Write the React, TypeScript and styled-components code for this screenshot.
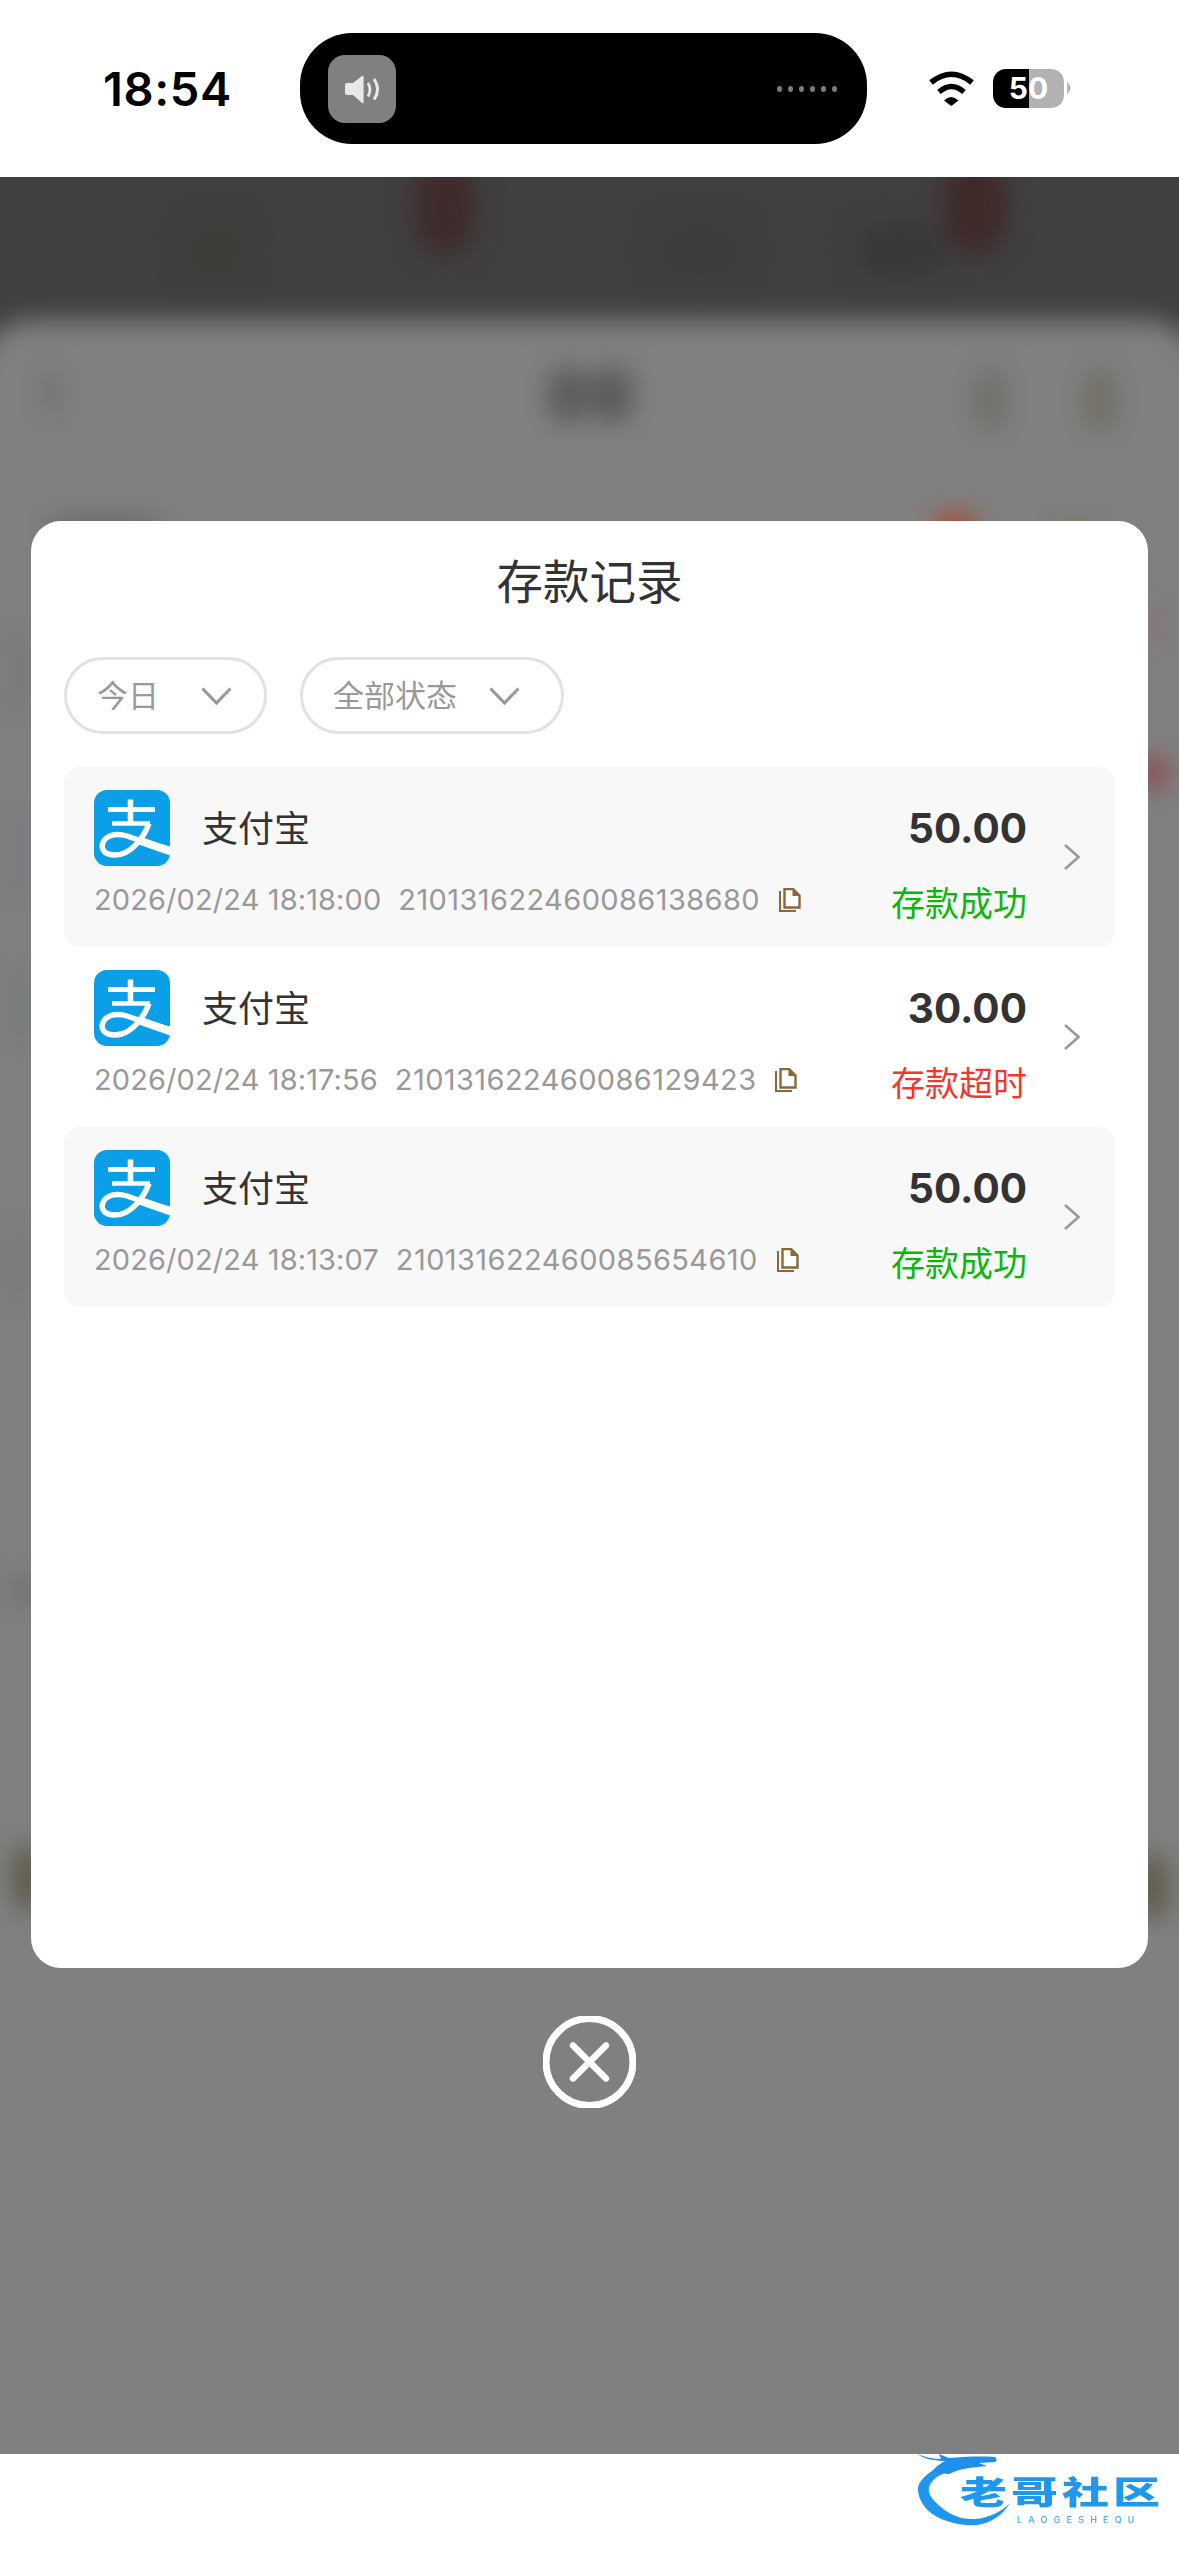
import React from 'react';
import styled, {createGlobalStyle} from 'styled-components';

const Global_Style = createGlobalStyle`
  html, body {
    margin: 0;
    padding: 0;
    background: #fff;
  }
  * {
    box-sizing: border-box;
  }
`;

const FONT = `Inter, 'Noto Sans CJK SC', sans-serif`;

const Page = styled.div`
  width: 1179px;
  height: 2556px;
  display: flex;
  flex-direction: column;
  overflow: hidden;
  font-family: ${FONT};
  background: #fff;
`;

/* status bar */
const Status_Bar = styled.div`
  height: 177px;
  flex-shrink: 0;
  display: flex;
  align-items: center;
  padding-left: 103px;
  background: #fff;
`;
const Clock = styled.div`
  width: 197px;
  font-family: Inter, sans-serif;
  font-size: 47px;
  font-weight: 600;
  letter-spacing: 0.6px;
  line-height: 1;
  color: #000;
`;
const Island = styled.div`
  width: 567px;
  height: 111px;
  border-radius: 52px;
  background: #000;
  display: flex;
  align-items: center;
  justify-content: space-between;
  padding: 0 30px 0 28px;
`;
const Volume_Tile = styled.div`
  width: 68px;
  height: 68px;
  border-radius: 17px;
  background: #808080;
`;
const Dots = styled.div`
  display: flex;
  gap: 6px;
`;
const Dot = styled.span`
  width: 5px;
  height: 6px;
  border-radius: 50%;
  background: #7d7d7d;
`;
const Wifi = styled.svg`
  margin-left: 61px;
  flex-shrink: 0;
`;
const Battery = styled.div`
  position: relative;
  margin-left: 18px;
  width: 71px;
  height: 39px;
  border-radius: 13px;
  background: linear-gradient(90deg, #000 36px, #b2b2b2 36px);
  color: #fff;
  font-family: Inter, sans-serif;
  font-size: 30px;
  font-weight: 700;
  line-height: 39px;
  text-align: center;
  &::after {
    content: '';
    position: absolute;
    left: 74px;
    top: 12px;
    border-left: 4px solid #b2b2b2;
    border-top: 7px solid transparent;
    border-bottom: 7px solid transparent;
  }
`;

/* dimmed area */
const Stage = styled.div`
  position: relative;
  height: 2277px;
  flex-shrink: 0;
  overflow: hidden;
  background: #404040;
  padding: 344px 31px 0;
  display: flex;
  flex-direction: column;
  align-items: center;
`;
const Blur_Layer = styled.div`
  position: absolute;
  inset: 0;
  filter: blur(13px);
`;
const Back_Sheet = styled.div`
  position: absolute;
  left: -26px;
  right: -26px;
  top: 143px;
  bottom: -60px;
  border-radius: 60px 60px 0 0;
  background: #808080;
`;
const Spot = styled.div<{$x: number; $y: number; $w: number; $h: number; $c: string}>`
  position: absolute;
  left: ${(p) => p.$x - p.$w / 2}px;
  top: ${(p) => p.$y - 177 - p.$h / 2}px;
  width: ${(p) => p.$w}px;
  height: ${(p) => p.$h}px;
  border-radius: 40%;
  background: ${(p) => p.$c};
`;

const Modal = styled.div`
  position: relative;
  width: 1117px;
  height: 1447px;
  flex-shrink: 0;
  border-radius: 30px;
  background: #fff;
  padding: 36px 33px 0;
`;
const Title = styled.div`
  font-size: 46.5px;
  line-height: 50px;
  text-align: center;
  color: #333;
`;
const Filters = styled.div`
  display: flex;
  gap: 33px;
  margin-top: 50px;
`;
const Pill = styled.div<{$width: number; $gap: number}>`
  width: ${(p) => p.$width}px;
  height: 77px;
  border: 3px solid #e2e2e2;
  border-radius: 39px;
  display: flex;
  align-items: center;
  gap: ${(p) => p.$gap}px;
  padding-left: 30px;
  font-size: 31px;
  color: #999;
`;
const Pill_Label = styled.span`
  margin-top: -4px;
`;
const List = styled.div`
  margin-top: 33px;
`;
const Card = styled.div<{$tinted: boolean}>`
  height: 180px;
  border-radius: 16px;
  background: ${(p) => (p.$tinted ? '#f8f8f8' : '#fff')};
  display: flex;
  align-items: center;
  padding: 0 35px 0 30px;
`;
const Card_Main = styled.div`
  flex: 1;
  padding-right: 37px;
`;
const Top_Row = styled.div`
  display: flex;
  align-items: center;
  height: 76px;
  margin-top: -3px;
`;
const Alipay_Icon = styled.svg`
  flex-shrink: 0;
  border-radius: 13px;
`;
const Name = styled.div`
  flex: 1;
  margin: -5px 0 0 32px;
  font-size: 36px;
  color: #333;
`;
const Amount = styled.div`
  font-family: Inter, sans-serif;
  font-size: 40.5px;
  font-weight: 700;
  color: #333;
`;
const Bottom_Row = styled.div`
  display: flex;
  align-items: center;
  justify-content: space-between;
  height: 40px;
  margin-top: 15px;
`;
const Meta = styled.div`
  display: flex;
  align-items: center;
  font-family: Inter, sans-serif;
  font-size: 29px;
  letter-spacing: 0.1px;
  color: #999;
  margin-top: -3px;
`;
const Order_No = styled.span`
  margin-left: 17px;
  letter-spacing: 0.4px;
`;
const Copy_Icon = styled.svg`
  margin-left: 19px;
`;
const Status = styled.div<{$ok: boolean}>`
  font-size: 34px;
  color: ${(p) => (p.$ok ? '#0ab70a' : '#f0392b')};
`;
const Close_Icon = styled.svg`
  position: relative;
  flex-shrink: 0;
  margin-top: 48px;
`;

/* watermark strip */
const Bottom_Bar = styled.div`
  flex: 1;
  display: flex;
  justify-content: flex-end;
  background: #fff;
`;
const Logo = styled.div`
  position: relative;
  width: 262px;
  height: 102px;
  padding-left: 43px;
`;
const Logo_Dragon = styled.svg`
  position: absolute;
  left: 0;
  top: 0;
  filter: blur(0.5px);
`;
const Logo_Name = styled.div`
  margin-top: 8px;
  height: 60px;
  font-size: 47px;
  font-weight: 900;
  line-height: 60px;
  letter-spacing: 4px;
  white-space: nowrap;
  transform: scaleY(0.68);
  color: #1f97ef;
  filter: blur(0.6px);
`;
const Logo_Sub = styled.div`
  margin: -7px 0 0 57px;
  font-family: Inter, sans-serif;
  font-size: 9px;
  font-weight: 500;
  letter-spacing: 6.2px;
  line-height: 10px;
  white-space: nowrap;
  color: #4aa9ec;
  filter: blur(0.4px);
`;

const SPOTS = [
  {x: 445, y: 205, w: 62, h: 100, c: '#3f2b2b'},
  {x: 975, y: 205, w: 62, h: 100, c: '#3f2929'},
  {x: 215, y: 250, w: 60, h: 60, c: '#3c3c38'},
  {x: 700, y: 250, w: 90, h: 60, c: '#3c3c3c'},
  {x: 900, y: 250, w: 90, h: 50, c: '#383838'},
  {x: 568, y: 395, w: 42, h: 56, c: '#5c5c5c'},
  {x: 612, y: 395, w: 42, h: 56, c: '#5a5a5a'},
  {x: 50, y: 393, w: 20, h: 50, c: '#727272'},
  {x: 990, y: 400, w: 36, h: 66, c: '#72706b'},
  {x: 1100, y: 400, w: 36, h: 66, c: '#726f65'},
  {x: 955, y: 530, w: 42, h: 34, c: '#a8482f'},
  {x: 105, y: 530, w: 120, h: 30, c: '#6a6a6a'},
  {x: 1075, y: 530, w: 60, h: 26, c: '#7d786c'},
  {x: 20, y: 672, w: 20, h: 90, c: '#7a7773'},
  {x: 22, y: 854, w: 20, h: 100, c: '#777a80'},
  {x: 22, y: 1007, w: 20, h: 90, c: '#747a78'},
  {x: 22, y: 1265, w: 20, h: 90, c: '#7b7874'},
  {x: 24, y: 1590, w: 26, h: 36, c: '#707070'},
  {x: 28, y: 1878, w: 30, h: 66, c: '#5a5545'},
  {x: 1150, y: 624, w: 24, h: 40, c: '#877272'},
  {x: 1152, y: 773, w: 34, h: 34, c: '#8a4d4d'},
  {x: 1152, y: 1887, w: 30, h: 66, c: '#5a5545'},
];

const RECORDS = [
  {time: '2026/02/24 18:18:00', no: '210131622460086138680', amount: '50.00', ok: true},
  {time: '2026/02/24 18:17:56', no: '210131622460086129423', amount: '30.00', ok: false},
  {time: '2026/02/24 18:13:07', no: '210131622460085654610', amount: '50.00', ok: true},
];

function Chevron_Down() {
  return (
    <svg width='31' height='18' viewBox='0 0 31 18' fill='none'>
      <path d='M1.5 1.5 15.5 16 29.5 1.5' stroke='#999' strokeWidth='3.2' />
    </svg>
  );
}

function Alipay() {
  return (
    <Alipay_Icon width='76' height='76' viewBox='0 0 76 76'>
      <rect width='76' height='76' fill='#0a9fe6' />
      <g fill='none' stroke='#fff' strokeWidth='5'>
        <path d='M14 19.5H61' />
        <path d='M36.5 9.5V32' strokeWidth='5.5' />
        <path d='M18 33.5H56' strokeWidth='4.5' />
        <path
          d='M55 33.5C50 47 37 65 21 65 11 65 7 60 8.5 54 10.5 46 21 42 33 46 44 50 56 54 78 60'
          strokeWidth='5.5'
        />
        <path d='M44 50 78 62' strokeWidth='8' />
      </g>
    </Alipay_Icon>
  );
}

function Copy() {
  return (
    <Copy_Icon width='22' height='24' viewBox='0 0 22 24' fill='none'>
      <path d='M1 3V23H17' stroke='#8a683a' strokeWidth='2' />
      <path d='M5.5 1H14L20.5 7.5V19.5H5.5Z' fill='#fff' stroke='#8a683a' strokeWidth='2.4' />
      <path d='M13.5 1 20.5 8H13.5Z' fill='#8a683a' />
    </Copy_Icon>
  );
}

function Chevron_Right() {
  return (
    <svg width='16' height='26' viewBox='0 0 16 26' fill='none' style={{flexShrink: 0}}>
      <path d='M1 1 14.5 13 1 25' stroke='#999' strokeWidth='2.6' />
    </svg>
  );
}

export default function App() {
  return (
    <Page>
      <Global_Style />
      <Status_Bar>
        <Clock>18:54</Clock>
        <Island>
          <Volume_Tile>
            <svg width='68' height='68' viewBox='0 0 68 68' fill='none'>
              <path
                d='M17 30a2 2 0 0 1 2-2h6l9-7c1-.6 1.6 0 1.6 1V47c0 1-.6 1.6-1.6 1l-9-8h-6a2 2 0 0 1-2-2Z'
                fill='#e8e8e8'
              />
              <path d='M40 28c2.6 4.4 2.6 9 0 13.5' stroke='#e8e8e8' strokeWidth='2.8' />
              <path d='M46 24c4.6 6.6 4.6 14 0 20.5' stroke='#e8e8e8' strokeWidth='3' />
            </svg>
          </Volume_Tile>
          <Dots>
            {[0, 1, 2, 3, 4, 5].map((i) => (
              <Dot key={i} />
            ))}
          </Dots>
        </Island>
        <Wifi width='47' height='35' viewBox='0 0 47 35' fill='none'>
          <path d='M3 11.5Q23.5 -5 44 11.5' stroke='#000' strokeWidth='5.5' />
          <path d='M11 21Q23.5 10 36 21' stroke='#000' strokeWidth='5.5' />
          <path d='M16 29.5Q23 22.5 30.5 29.5L23.3 35Z' fill='#000' />
        </Wifi>
        <Battery>50</Battery>
      </Status_Bar>

      <Stage>
        <Blur_Layer>
          <Back_Sheet />
          {SPOTS.map((s, idx) => (
            <Spot key={idx} $x={s.x} $y={s.y} $w={s.w} $h={s.h} $c={s.c} />
          ))}
        </Blur_Layer>

        <Modal>
          <Title>存款记录</Title>
          <Filters>
            <Pill $width={203} $gap={42}>
              <Pill_Label>今日</Pill_Label>
              <Chevron_Down />
            </Pill>
            <Pill $width={264} $gap={32}>
              <Pill_Label>全部状态</Pill_Label>
              <Chevron_Down />
            </Pill>
          </Filters>
          <List>
            {RECORDS.map((r, idx) => (
              <Card key={r.no} $tinted={idx % 2 === 0}>
                <Card_Main>
                  <Top_Row>
                    <Alipay />
                    <Name>支付宝</Name>
                    <Amount>{r.amount}</Amount>
                  </Top_Row>
                  <Bottom_Row>
                    <Meta>
                      {r.time}
                      <Order_No>{r.no}</Order_No>
                      <Copy />
                    </Meta>
                    <Status $ok={r.ok}>{r.ok ? '存款成功' : '存款超时'}</Status>
                  </Bottom_Row>
                </Card_Main>
                <Chevron_Right />
              </Card>
            ))}
          </List>
        </Modal>

        <Close_Icon width='93' height='92' viewBox='0 0 93 92' fill='none'>
          <circle cx='46.5' cy='46' r='43.5' stroke='#fff' strokeWidth='7' />
          <path d='M30 29.5 63 62.5M63 29.5 30 62.5' stroke='#fff' strokeWidth='6.5' strokeLinecap='round' />
        </Close_Icon>
      </Stage>

      <Bottom_Bar>
        <Logo>
          <Logo_Dragon width='120' height='102' viewBox='0 0 120 102' fill='none'>
            <path
              d='M18 15C6 22 0 30 1 37 3 52 14 62 30 67 42 71 52 72 60 71 74 69 86 61 93 49 84 58 72 64 58 65 44 66 32 60 24 53 15 46 9 38 13 31 16 25 22 21 28 19Z'
              fill='#1f97ef'
            />
            <path
              d='M0 0C8 3 16 5 24 5L22 0 32 4C44 3 62 2 78 3 80 5 80 7 78 8L62 9 70 12 52 14C44 15 38 17 32 20L20 19 16 16C20 12 24 9 28 7 18 7 8 5 0 0Z'
              fill='#1f8fee'
            />
          </Logo_Dragon>
          <Logo_Name>老哥社区</Logo_Name>
          <Logo_Sub>LAOGESHEQU</Logo_Sub>
        </Logo>
      </Bottom_Bar>
    </Page>
  );
}
